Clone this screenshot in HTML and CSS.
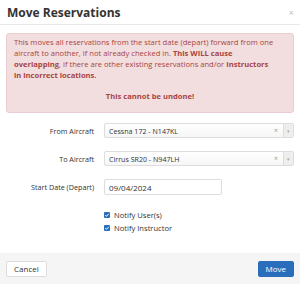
FILE: index.html
```html
<!DOCTYPE html>
<html lang="en">
<head>
    <meta charset="UTF-8" />
    <meta name="viewport" content="width=device-width, initial-scale=1" />
    <title>Move Reservations</title>
    <link rel="stylesheet" href="styles.css">
</head>
<body>
    <div class="modal">
        <div class="modal-header">
            <h4>Move Reservations</h4>
            <span class="close">&times;</span>
        </div>
        <div class="modal-body">
            <div class="alert">
                <p>This moves all reservations from the start date (depart) forward from one aircraft to another, if not already checked in. <b>This WILL cause overlapping</b>, if there are other existing reservations and/or <b>Instructors in incorrect locations.</b></p>
                <p class="center"><b>This cannot be undone!</b></p>
            </div>
            <form class="form">
                <div class="row">
                    <label>From Aircraft</label>
                    <div class="select">
                        <span class="value">Cessna 172 - N147KL</span>
                        <span class="clear">&times;</span>
                        <span class="arrow">&#9662;</span>
                    </div>
                </div>
                <div class="row">
                    <label>To Aircraft</label>
                    <div class="select">
                        <span class="value">Cirrus SR20 - N947LH</span>
                        <span class="clear">&times;</span>
                        <span class="arrow">&#9662;</span>
                    </div>
                </div>
                <div class="row">
                    <label>Start Date (Depart)</label>
                    <input type="text" class="date" value="09/04/2024" />
                </div>
                <div class="checks">
                    <div class="check"><span class="box"><svg viewBox="0 0 8 8"><path d="M1.6 4.1 L3.3 5.8 L6.4 2.4" fill="none" stroke="#fff" stroke-width="1.3"/></svg></span>Notify User(s)</div>
                    <div class="check"><span class="box"><svg viewBox="0 0 8 8"><path d="M1.6 4.1 L3.3 5.8 L6.4 2.4" fill="none" stroke="#fff" stroke-width="1.3"/></svg></span>Notify Instructor</div>
                </div>
            </form>
        </div>
        <div class="modal-footer">
            <button class="btn">Cancel</button>
            <button class="btn primary">Move</button>
        </div>
    </div>
</body>
</html>
```

FILE: styles.css
```css
body {
    margin: 0;
    font-family: 'Open Sans', 'Noto Sans', sans-serif;
    color: #333;
    background: #fff;
    font-size: 8px;
}
.modal {
    width: 300px;
    height: 284px;
    display: flex;
    flex-direction: column;
}
.modal-header {
    height: 25px;
    box-sizing: border-box;
    border-bottom: 1px solid #e8e8e8;
    display: flex;
    align-items: center;
    justify-content: space-between;
    padding: 0 6px 0 7px;
}
.modal-header h4 {
    margin: 0;
    font-size: 12px;
    font-weight: 700;
    color: #333;
}
.close {
    color: #bbb;
    font-size: 9px;
}
.modal-body {
    flex: 1;
    padding: 8px 6px 0 6px;
}
.alert {
    background: #f2dede;
    border: 1px solid #ebccd1;
    border-radius: 3px;
    color: #a94442;
    padding: 3px 18px 10px 7px;
    font-size: 7.6px;
    line-height: 11px;
}
.alert p {
    margin: 0;
}
.alert .center {
    text-align: center;
    margin-top: 10px;
    padding-left: 11px;
}
.form {
    margin-top: 10px;
}
.row {
    display: flex;
    align-items: center;
    margin-bottom: 13px;
}
.row label {
    width: 88px;
    text-align: right;
    padding-right: 10px;
    font-size: 7.2px;
    color: #333;
}
.select {
    flex: 1;
    height: 15px;
    box-sizing: border-box;
    border: 1px solid #ddd;
    border-radius: 2px;
    display: flex;
    align-items: center;
    background: linear-gradient(#fff, #f6f6f6);
    font-size: 7.1px;
}
.select .value {
    flex: 1;
    padding-left: 4px;
}
.select .clear {
    color: #999;
    font-size: 7px;
    padding-right: 5px;
}
.select .arrow {
    width: 9px;
    height: 13px;
    border-left: 1px solid #ddd;
    background: #eee;
    color: #aaa;
    font-size: 5px;
    display: flex;
    align-items: center;
    justify-content: center;
}
.date {
    width: 118px;
    height: 16px;
    box-sizing: border-box;
    border: 1px solid #ddd;
    border-radius: 2px;
    font-family: inherit;
    font-size: 8px;
    color: #333;
    padding: 0 4px;
    margin: 0;
}
.checks {
    padding-left: 98px;
    margin-top: 11px;
}
.check {
    display: flex;
    align-items: center;
    height: 13px;
    font-size: 7.6px;
}
.box {
    width: 6px;
    height: 6px;
    background: #2a6ebb;
    border-radius: 1px;
    margin-right: 4px;
    display: flex;
    align-items: center;
    justify-content: center;
}
.box svg {
    width: 6px;
    height: 6px;
}
.modal-footer {
    height: 31px;
    background: #f5f5f5;
    display: flex;
    align-items: center;
    justify-content: space-between;
    padding: 0 6px;
    box-sizing: border-box;
}
.btn {
    font-family: inherit;
    font-size: 8px;
    height: 16px;
    padding: 0 7px;
    border: 1px solid #ddd;
    border-radius: 2px;
    background: #fff;
    color: #333;
}
.btn.primary {
    background: #2a6ebb;
    border-color: #2a6ebb;
    color: #fff;
    padding: 0 7px;
}
```
